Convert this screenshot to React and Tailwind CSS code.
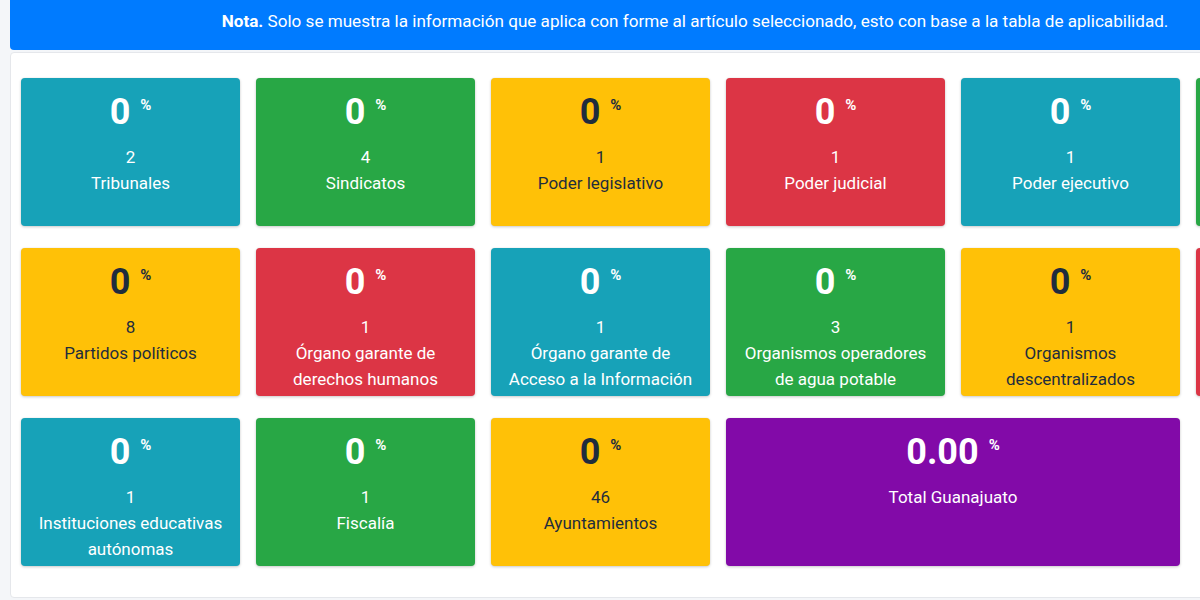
const rows = [
  [
    { pct: '0', num: '2', label: ['Tribunales'], color: 'info' },
    { pct: '0', num: '4', label: ['Sindicatos'], color: 'success' },
    { pct: '0', num: '1', label: ['Poder legislativo'], color: 'warning' },
    { pct: '0', num: '1', label: ['Poder judicial'], color: 'danger' },
    { pct: '0', num: '1', label: ['Poder ejecutivo'], color: 'info' },
    { pct: '', num: '', label: [], color: 'success' },
  ],
  [
    { pct: '0', num: '8', label: ['Partidos políticos'], color: 'warning' },
    { pct: '0', num: '1', label: ['Órgano garante de', 'derechos humanos'], color: 'danger' },
    { pct: '0', num: '1', label: ['Órgano garante de', 'Acceso a la Información'], color: 'info' },
    { pct: '0', num: '3', label: ['Organismos operadores', 'de agua potable'], color: 'success' },
    { pct: '0', num: '1', label: ['Organismos', 'descentralizados'], color: 'warning' },
    { pct: '', num: '', label: [], color: 'danger' },
  ],
]

const row3 = [
  { pct: '0', num: '1', label: ['Instituciones educativas', 'autónomas'], color: 'info' },
  { pct: '0', num: '1', label: ['Fiscalía'], color: 'success' },
  { pct: '0', num: '46', label: ['Ayuntamientos'], color: 'warning' },
]

const colors = {
  info: 'bg-[#17a2b8] text-white',
  success: 'bg-[#28a745] text-white',
  warning: 'bg-[#ffc107] text-[#1f2d3d]',
  danger: 'bg-[#dc3545] text-white',
  purple: 'bg-[#820aa8] text-white',
}

function Pct({ value }) {
  return (
    <div className="flex items-start justify-center h-[44px]">
      {value && (
        <>
          <span className="text-[36px] leading-[44px] font-bold">{value}</span>
          <span className="text-[15px] leading-[15px] font-bold ml-[10px] mt-[8px]">%</span>
        </>
      )}
    </div>
  )
}

function StatBox({ item, wide }) {
  return (
    <div
      className={`${colors[item.color]} ${wide ? 'w-[454px]' : 'w-[219px]'} h-[148px] shrink-0 rounded-[4px] shadow-[0_0_1px_rgba(0,0,0,0.125),0_1px_3px_rgba(0,0,0,0.2)] pt-[12px] text-center text-[17px] leading-[26px]`}
    >
      <Pct value={item.pct} />
      <div className="mt-[10px]">{item.num}</div>
      {item.label.map((l, i) => (
        <div key={i}>{l}</div>
      ))}
    </div>
  )
}

export default function App() {
  return (
    <div className="w-[1200px] h-[600px] overflow-hidden bg-[#f4f6f9] pl-[10px] font-['Roboto','Liberation_Sans',sans-serif]">
      <div className="w-[1370px]">
        {/* alerta */}
        <div className="bg-[#007bff] text-white h-[54px] -mt-[4px] pt-[14px] rounded-b-[4px] text-center text-[17.1px] leading-[22px]">
          <b>Nota.</b> Solo se muestra la información que aplica con forme al artículo seleccionado, esto con base a la tabla de aplicabilidad.
        </div>

        {/* tarjeta */}
        <div className="mt-[2px] bg-white border border-[#e5e7eb] rounded-[4px] h-[546px] pl-[10px] pt-[25px]">
          <div className="flex flex-col gap-[22px]">
            {rows.map((row, r) => (
              <div key={r} className="flex gap-[16px]">
                {row.map((item, i) => (
                  <StatBox key={i} item={item} />
                ))}
              </div>
            ))}
            <div className="flex gap-[16px]">
              {row3.map((item, i) => (
                <StatBox key={i} item={item} />
              ))}
              <StatBox item={{ pct: '0.00', num: 'Total Guanajuato', label: [], color: 'purple' }} wide />
            </div>
          </div>
        </div>
      </div>
    </div>
  )
}
